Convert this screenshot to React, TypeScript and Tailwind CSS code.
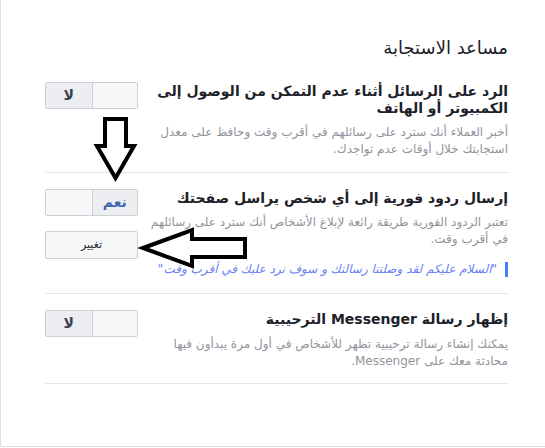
import * as React from "react"

interface ToggleProps {
  value: "yes" | "no"
}

function Toggle({ value }: ToggleProps) {
  return (
    <div className="flex h-[27px] w-[93px] overflow-hidden rounded-[2px] border border-[#ccd0d5]">
      <div
        className={`flex w-1/2 items-center justify-center border-l border-[#ccd0d5] text-[14px] font-bold ${
          value === "yes" ? "bg-[#eceef1] text-[#4267b2]" : "bg-[#f6f7f9]"
        }`}
      >
        {value === "yes" ? "نعم" : ""}
      </div>
      <div
        className={`flex w-1/2 items-center justify-center text-[14px] font-bold ${
          value === "no" ? "bg-[#eceef1] text-[#3b4050]" : "bg-[#f6f7f9]"
        }`}
      >
        {value === "no" ? "لا" : ""}
      </div>
    </div>
  )
}

export default function App() {
  return (
    <div
      dir="rtl"
      className="relative h-[448px] w-[545px] bg-white"
      style={{ fontFamily: '"DejaVu Sans", sans-serif' }}
    >
      <div className="h-[447px] border-b border-l border-[#dddfe2] pl-[44px] pr-[37px] pt-[37px]">
        <h2 className="text-[18px] leading-[22px] text-[#1d2129]">مساعد الاستجابة</h2>

        {/* row 1 */}
        <div className="mt-[23px] flex justify-between border-b border-[#e5e6e9] pb-[14px]">
          <div className="w-[332px]">
            <h3 className="mt-px whitespace-nowrap text-[14px] font-bold leading-[17px] text-[#1d2129]">
              الرد على الرسائل أثناء عدم التمكن من الوصول إلى
              <br />
              الكمبيوتر أو الهاتف
            </h3>
            <p className="mt-[7px] whitespace-nowrap text-[12px] leading-[17px] text-[#90949c]">
              أخبر العملاء أنك سترد على رسائلهم في أقرب وقت وحافظ على معدل
              <br />
              استجابتك خلال أوقات عدم تواجدك.
            </p>
          </div>
          <Toggle value="no" />
        </div>

        {/* row 2 */}
        <div className="flex justify-between border-b border-[#e5e6e9] pb-[16px] pt-[16px]">
          <div className="w-[332px]">
            <h3 className="mt-px whitespace-nowrap text-[14px] font-bold leading-[17px] text-[#1d2129]">
              إرسال ردود فورية إلى أي شخص يراسل صفحتك
            </h3>
            <p className="mt-[7px] whitespace-nowrap text-[12px] leading-[17px] text-[#90949c]">
              تعتبر الردود الفورية طريقة رائعة لإبلاغ الأشخاص أنك سترد على رسائلهم
              <br />
              في أقرب وقت.
            </p>
            <div className="mt-[14px] whitespace-nowrap border-r-[3px] border-[#4080ff] pr-[8px] text-[12px] italic leading-[15px] text-[#6a80f5]">
              "السلام عليكم لقد وصلتنا رسالتك و سوف نرد عليك في أقرب وقت"
            </div>
          </div>
          <div className="flex flex-col gap-[15px]">
            <Toggle value="yes" />
            <button className="h-[28px] w-[93px] rounded-[2px] border border-[#ced0d4] bg-[#f6f7f9] text-[11px] text-[#1d2129]">
              تغيير
            </button>
          </div>
        </div>

        {/* row 3 */}
        <div className="flex justify-between border-b border-[#e5e6e9] pb-[13px] pt-[16px]">
          <div className="w-[332px]">
            <h3 className="mt-px whitespace-nowrap text-[14px] font-bold leading-[17px] text-[#1d2129]">
              إظهار رسالة Messenger الترحيبية
            </h3>
            <p className="mt-[8px] whitespace-nowrap text-[12px] leading-[17px] text-[#90949c]">
              يمكنك إنشاء رسالة ترحيبية تظهر للأشخاص في أول مرة يبدأون فيها
              <br />
              محادثة معك على Messenger.
            </p>
          </div>
          <Toggle value="no" />
        </div>
      </div>

      {/* annotation arrows drawn over the screenshot */}
      <svg
        className="pointer-events-none absolute inset-0"
        width="545"
        height="448"
        viewBox="0 0 545 448"
      >
        <polygon
          points="105,119 126,119 126,146 134,146 115.5,178 97,146 105,146"
          fill="none"
          stroke="#000"
          strokeWidth="4"
          strokeLinejoin="miter"
        />
        <polygon
          points="143,248 192,230 192,239 245,239 245,257 192,257 192,266"
          fill="none"
          stroke="#000"
          strokeWidth="4"
          strokeLinejoin="miter"
        />
      </svg>
    </div>
  )
}
